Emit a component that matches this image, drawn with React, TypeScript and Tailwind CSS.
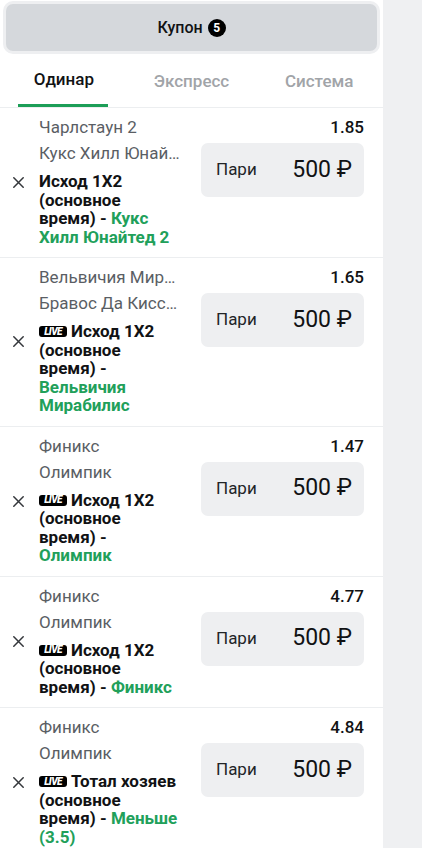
import React from "react";

type Part = { t: string; g?: boolean };
type Bet = {
  a: string;
  b: string;
  odds: string;
  live: boolean;
  lines: Part[][];
};

const bets: Bet[] = [
  {
    a: "Чарлстаун 2",
    b: "Кукс Хилл Юнайтед 2",
    odds: "1.85",
    live: false,
    lines: [
      [{ t: "Исход 1X2" }],
      [{ t: "(основное" }],
      [{ t: "время) - " }, { t: "Кукс", g: true }],
      [{ t: "Хилл Юнайтед 2", g: true }],
    ],
  },
  {
    a: "Вельвичия Мирабилис",
    b: "Бравос Да Киссама",
    odds: "1.65",
    live: true,
    lines: [
      [{ t: "Исход 1X2" }],
      [{ t: "(основное" }],
      [{ t: "время) -" }],
      [{ t: "Вельвичия", g: true }],
      [{ t: "Мирабилис", g: true }],
    ],
  },
  {
    a: "Финикс",
    b: "Олимпик",
    odds: "1.47",
    live: true,
    lines: [
      [{ t: "Исход 1X2" }],
      [{ t: "(основное" }],
      [{ t: "время) -" }],
      [{ t: "Олимпик", g: true }],
    ],
  },
  {
    a: "Финикс",
    b: "Олимпик",
    odds: "4.77",
    live: true,
    lines: [
      [{ t: "Исход 1X2" }],
      [{ t: "(основное" }],
      [{ t: "время) - " }, { t: "Финикс", g: true }],
    ],
  },
  {
    a: "Финикс",
    b: "Олимпик",
    odds: "4.84",
    live: true,
    lines: [
      [{ t: "Тотал хозяев" }],
      [{ t: "(основное" }],
      [{ t: "время) - " }, { t: "Меньше", g: true }],
      [{ t: "(3.5)", g: true }],
    ],
  },
];

function CloseIcon() {
  return (
    <svg width="11" height="11" viewBox="0 0 11 11" fill="none">
      <path d="M0.8 0.8L10.2 10.2M10.2 0.8L0.8 10.2" stroke="#34373b" strokeWidth="1.5" strokeLinecap="round" />
    </svg>
  );
}

function Live() {
  return (
    <span className="mr-[4px] inline-flex h-[11px] w-[28px] -translate-y-[1px] items-center justify-center rounded-[3px] bg-black align-middle text-[10px] font-black italic leading-none tracking-[-0.6px] text-white">
      LIVE
    </span>
  );
}

function Row({ bet }: { bet: Bet }) {
  return (
    <div className="flex items-center border-b border-[#eceef0]">
      <div className="flex w-[39px] shrink-0 pl-[13px]">
        <CloseIcon />
      </div>
      <div className="min-w-0 flex-1 pb-[11px] pt-[6px]">
        <div className="truncate text-[17px] leading-[26px] text-[#5a5e64]">{bet.a}</div>
        <div className="truncate text-[17px] leading-[26px] text-[#5a5e64]">{bet.b}</div>
        <div className="mt-[6px] text-[17px] font-bold leading-[18.5px] text-[#111214]">
          {bet.lines.map((line, i) => (
            <div key={i} className="whitespace-nowrap">
              {i === 0 && bet.live ? <Live /> : null}
              {line.map((p, j) => (
                <span key={j} className={p.g ? "text-[#21a05a]" : ""}>
                  {p.t}
                </span>
              ))}
            </div>
          ))}
        </div>
      </div>
      <div className="ml-[19px] mr-[19px] w-[163px] shrink-0 self-start pt-[6px]">
        <div className="text-right text-[17px] font-medium leading-[26px] text-[#111214]">{bet.odds}</div>
        <div className="mt-[3px] flex h-[54px] items-center justify-between rounded-[7px] bg-[#eeeff1] pl-[15px] pr-[12px]">
          <span className="text-[17px] text-[#222427]">Пари</span>
          <span className="text-[23px] text-[#111214]">500 ₽</span>
        </div>
      </div>
    </div>
  );
}

export default function App() {
  return (
    <div className="flex h-[848px] w-[422px] overflow-hidden bg-[#eff0f2] font-[Roboto,sans-serif]">
      <div className="w-[383px] shrink-0 bg-white">
        <div className="px-[3px] pt-[1px]">
          <div className="flex h-[53px] items-center justify-center rounded-[10px] border-[3px] border-[#eeeff1] bg-[#d5d8dc]">
            <span className="text-[16px] font-medium text-[#111214]">Купон</span>
            <span className="ml-[5px] flex h-[18px] w-[18px] items-center justify-center rounded-full bg-black text-[12px] font-bold text-white">
              5
            </span>
          </div>
        </div>
        <div className="grid grid-cols-3 border-b border-[#eceef0]">
          <div className="flex h-[53px] flex-col">
            <div className="flex flex-1 items-center justify-center pt-[2px] text-[17px] font-medium text-[#111214]">Одинар</div>
            <div className="ml-[18px] mr-[20px] h-[3px] bg-[#1c9e57]" />
          </div>
          <div className="flex h-[53px] flex-col">
            <div className="flex flex-1 items-center justify-center pt-[2px] text-[17px] font-medium text-[#a1a4a8]">Экспресс</div>
          </div>
          <div className="flex h-[53px] flex-col">
            <div className="flex flex-1 items-center justify-center pt-[2px] text-[17px] font-medium text-[#a1a4a8]">Система</div>
          </div>
        </div>
        {bets.map((b, i) => (
          <Row key={i} bet={b} />
        ))}
      </div>
    </div>
  );
}
